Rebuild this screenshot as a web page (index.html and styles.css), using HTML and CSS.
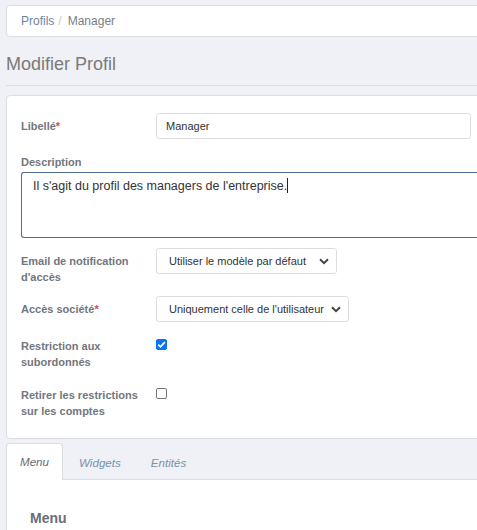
FILE: index.html
```html
<!DOCTYPE html>
<html lang="fr">
<head>
<meta charset="utf-8">
<title>Modifier Profil</title>
<link rel="stylesheet" href="styles.css">
</head>
<body>
<div class="page">
  <nav class="breadcrumb">
    <a class="crumb-link" href="#">Profils</a>
    <span class="crumb-sep">/</span>
    <span class="crumb-current">Manager</span>
  </nav>

  <h1 class="title">Modifier Profil</h1>
  <hr class="rule">

  <section class="panel">
    <div class="row">
      <label class="label">Libellé<span class="req">*</span></label>
      <div class="input">Manager</div>
    </div>

    <div class="row-stack">
      <label class="label-top">Description</label>
      <div class="textarea">Il s'agit du profil des managers de l'entreprise.<span class="caret"></span></div>
    </div>

    <div class="row row-select1">
      <label class="label">Email de notification d'accès</label>
      <div class="select select-a">
        <span>Utiliser le modèle par défaut</span>
        <svg class="chev" width="10" height="7" viewBox="0 0 10 7"><path d="M1 1.2 L5 5.2 L9 1.2" fill="none" stroke="#444" stroke-width="2"/></svg>
      </div>
    </div>

    <div class="row row-select2">
      <label class="label">Accès société<span class="req">*</span></label>
      <div class="select select-b">
        <span>Uniquement celle de l'utilisateur</span>
        <svg class="chev" width="10" height="7" viewBox="0 0 10 7"><path d="M1 1.2 L5 5.2 L9 1.2" fill="none" stroke="#444" stroke-width="2"/></svg>
      </div>
    </div>

    <div class="row row-check1">
      <label class="label label-flush">Restriction aux subordonnés</label>
      <span class="check checked">
        <svg width="11" height="11" viewBox="0 0 11 11"><path d="M2.3 5.6 L4.5 7.8 L8.8 3.2" fill="none" stroke="#fff" stroke-width="1.8"/></svg>
      </span>
    </div>

    <div class="row row-check2">
      <label class="label label-flush">Retirer les restrictions sur les comptes</label>
      <span class="check"></span>
    </div>
  </section>

  <div class="tabs">
    <div class="tab-bar">
      <span class="tab active">Menu</span>
      <span class="tab">Widgets</span>
      <span class="tab">Entités</span>
    </div>
    <div class="tab-content">
      <h2 class="tab-heading">Menu</h2>
    </div>
  </div>
</div>
</body>
</html>
```

FILE: styles.css
```css
html, body {
  margin: 0;
  padding: 0;
  background: #f0f1f6;
  overflow: hidden;
}
body {
  font-family: "Liberation Sans", Arial, sans-serif;
  color: #333;
  width: 477px;
  height: 530px;
}
.page {
  padding-left: 6px;
  width: 520px;
}
.breadcrumb {
  margin-top: 5px;
  height: 30px;
  background: #fff;
  border: 1px solid #dcdde2;
  border-radius: 4px;
  padding-left: 14px;
  display: flex;
  align-items: center;
  font-size: 12px;
}
.crumb-link {
  color: #6c84a3;
  text-decoration: none;
}
.crumb-sep {
  color: #c4c8d0;
  margin: 0 6px 0 4px;
}
.crumb-current {
  color: #7a7f88;
}
.title {
  margin: 0;
  padding-top: 16px;
  font-size: 18px;
  font-weight: normal;
  color: #7a7a7a;
  line-height: 22px;
}
.rule {
  margin: 10px 0 0 0;
  border: 0;
  border-top: 1px solid #dcdde2;
  height: 0;
}
.panel {
  margin-top: 9px;
  background: #fff;
  border: 1px solid #dcdde2;
  border-radius: 4px 0 0 4px;
  padding: 17px 0 19px 14px;
}
.row {
  display: flex;
  align-items: flex-start;
}
.label {
  width: 135px;
  flex: none;
  padding-top: 5px;
  font-size: 11px;
  font-weight: bold;
  line-height: 16px;
  color: #72767e;
}
.label-flush {
  padding-top: 0;
}
.req {
  color: #e0463c;
}
.input {
  width: 304px;
  height: 24px;
  border: 1px solid #dedede;
  border-radius: 3px;
  padding-left: 9px;
  font-size: 11px;
  line-height: 24px;
  color: #333;
}
.row-stack {
  margin-top: 15px;
}
.label-top {
  display: block;
  font-size: 11px;
  font-weight: bold;
  line-height: 16px;
  color: #72767e;
}
.textarea {
  margin-top: 2px;
  height: 56px;
  border: 1px solid #4f6f96;
  border-right: 0;
  border-radius: 3px 0 0 3px;
  padding: 5px 0 3px 11px;
  font-size: 12.5px;
  line-height: 16px;
  color: #333;
}
.caret {
  display: inline-block;
  width: 1px;
  height: 15px;
  background: #222;
  vertical-align: -3px;
}
.row-select1 {
  margin-top: 10px;
}
.row-select2 {
  margin-top: 11px;
}
.select {
  height: 24px;
  border: 1px solid #dedede;
  border-radius: 3px;
  padding-left: 12px;
  padding-right: 7px;
  display: flex;
  align-items: center;
  justify-content: space-between;
  font-size: 11px;
  color: #333;
  white-space: nowrap;
}
.select-a {
  width: 160px;
}
.select-b {
  width: 172px;
}
.chev {
  display: block;
  flex: none;
}
.row-check1 {
  margin-top: 16px;
}
.row-check2 {
  margin-top: 17px;
}
.check {
  margin-top: 1px;
  width: 9px;
  height: 9px;
  border: 1px solid #777;
  border-radius: 2px;
  background: #fff;
  position: relative;
}
.check.checked {
  background: #0b74f0;
  border-color: #0b74f0;
}
.check svg {
  position: absolute;
  left: -1px;
  top: -1px;
}
.tabs {
  margin-top: 0;
}
.tab-bar {
  display: flex;
  align-items: flex-end;
  height: 40px;
  border-bottom: 1px solid #dcdde2;
}
.tab {
  height: 35px;
  padding: 0 13px;
  margin-right: 2px;
  border: 1px solid transparent;
  border-bottom: 0;
  border-radius: 4px 4px 0 0;
  font-size: 11.6px;
  font-style: italic;
  line-height: 35px;
  color: #7890ad;
  margin-bottom: -1px;
}
.tab.active {
  background: #fff;
  border-color: #dcdde2;
  color: #666b74;
  height: 36px;
}
.tab-content {
  background: #fff;
  border-left: 1px solid #dcdde2;
  height: 60px;
  padding: 30px 0 0 23px;
}
.tab-heading {
  margin: 0;
  font-size: 14px;
  font-weight: bold;
  color: #6a6e76;
}
```
